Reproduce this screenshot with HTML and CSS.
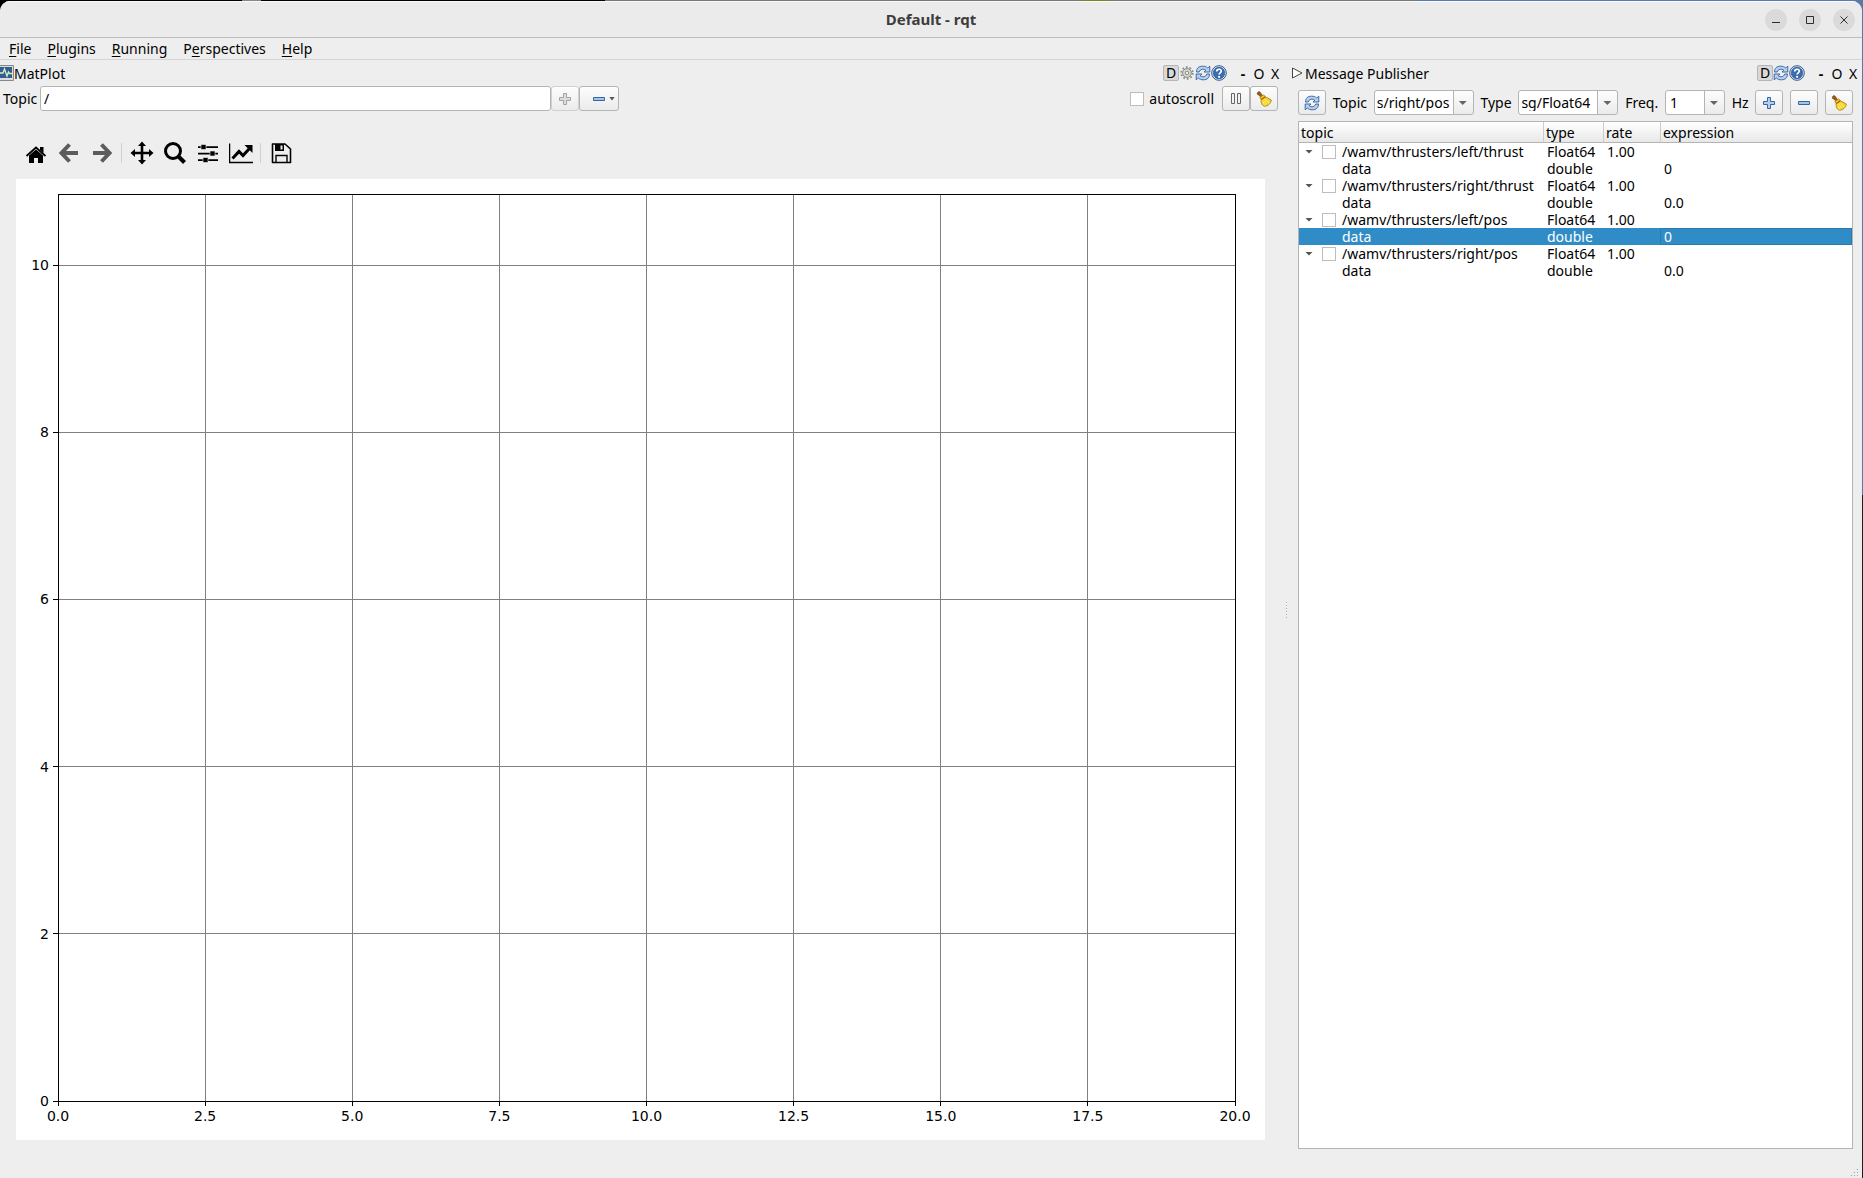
FILE: index.html
```
<!DOCTYPE html>
<html lang="en">
<head>
<meta charset="utf-8">
<title>Default - rqt</title>
<link rel="stylesheet" href="styles.css">
</head>
<body>
<svg class="defs" aria-hidden="true">
  <symbol id="refresh" viewBox="0 0 16 16">
    <path d="M1.500 7C1.500 3 4 1.200 7.500 1.200 10 1.200 11.500 1.800 12.700 3L14.800 1.200V7H9l1.800-1.900C8.500 3.400 5.200 4 4.200 7z" fill="#b9d0ec" stroke="#2f5f9e" stroke-width=".9"/>
    <path d="M14.500 9C14.500 13 12 14.800 8.500 14.800 6 14.800 4.500 14.200 3.300 13L1.200 14.800V9H7l-1.800 1.900C7.500 12.600 10.800 12 11.800 9z" fill="#b9d0ec" stroke="#2f5f9e" stroke-width=".9"/>
  </symbol>
  <symbol id="help" viewBox="0 0 16 16">
    <circle cx="8" cy="8" r="7.300" fill="#fff" stroke="#2c5590" stroke-width="1"/>
    <circle cx="8" cy="8" r="5.900" fill="#3a6db0" stroke="#2c5590" stroke-width=".6"/>
    <path d="M5.700 6.500C5.700 3.600 10.300 3.500 10.300 6.100 10.300 7.800 8.100 7.800 8.100 9.600" fill="none" stroke="#fff" stroke-width="1.700"/>
    <circle cx="8.100" cy="11.800" r="1.100" fill="#fff"/>
  </symbol>
  <symbol id="gear" viewBox="0 0 16 16">
    <circle cx="8" cy="8" r="5.800" fill="none" stroke="#8a8d84" stroke-width="1.800" stroke-dasharray="1.800 1.840"/>
    <circle cx="8" cy="8" r="4.400" fill="#d5d7d0" stroke="#8a8d84" stroke-width="1"/>
    <circle cx="8" cy="8" r="1.800" fill="#eee" stroke="#8a8d84" stroke-width="1"/>
  </symbol>
  <symbol id="broom" viewBox="0 0 16 16">
    <path d="M1.500 1.700C2.600 0 4.200.700 4.600 2L6.800 5 5 6.300 2.700 4C1.500 4 1 2.800 1.500 1.700z" fill="#9a5c18" stroke="#6e3a0c" stroke-width=".7"/>
    <path d="M3.800 6.600 7.800 3.900 9.300 5.800 15.300 9C15 12.500 12 15 8.300 15.300 5.500 14 4.600 11 5.200 8.500z" fill="#f3d62b" stroke="#b08a09" stroke-width=".9"/>
    <path d="M5.200 8.500 9.300 5.800" stroke="#cc3a18" stroke-width="1.200"/>
    <path d="M8 9 11 13.500M9.600 8.200 13 12M7 10.500 8.500 14.300" stroke="#fff3a0" stroke-width=".8"/>
  </symbol>
  <symbol id="plus" viewBox="0 0 16 16">
    <path d="M6.500 2.500h3v4h4v3h-4v4h-3v-4h-4v-3h4z" fill="#b5d0ee" stroke="#3465a4"/>
  </symbol>
  <symbol id="plus-off" viewBox="0 0 16 16">
    <path d="M6.500 2.500h3v4h4v3h-4v4h-3v-4h-4v-3h4z" fill="#dcdcdc" stroke="#a3a3a3"/>
  </symbol>
  <symbol id="minus" viewBox="0 0 16 16">
    <path d="M2.500 6.500h11v3h-11z" fill="#a3c4ea" stroke="#3465a4"/>
  </symbol>
</svg>

<div class="window">
  <header class="titlebar">
    <h1 class="window-title">Default - rqt</h1>
    <div class="window-buttons">
      <button class="round" aria-label="Minimize"><svg viewBox="0 0 22 22"><path d="M7 13.500h8" /></svg></button>
      <button class="round" aria-label="Maximize"><svg viewBox="0 0 22 22"><path d="M7.500 7.500h7v7h-7z"/></svg></button>
      <button class="round" aria-label="Close"><svg viewBox="0 0 22 22"><path d="M7.500 7.500l7 7M14.500 7.500l-7 7"/></svg></button>
    </div>
  </header>

  <nav class="menubar">
    <button><u>F</u>ile</button>
    <button><u>P</u>lugins</button>
    <button><u>R</u>unning</button>
    <button>P<u>e</u>rspectives</button>
    <button><u>H</u>elp</button>
  </nav>

  <main class="docks">
    <section class="dock plot-dock">
      <div class="dock-title">
        <svg class="dock-icon" viewBox="0 0 14 16"><path d="M-2 .5H13.500v15H-2z" fill="#ddd" stroke="#888"/><path d="M-2 2H12v11H-2z" fill="#2f5f96"/><path d="M0 8h3l1.500-4 2.500 7 1.500-4 1 1.500H12" fill="none" stroke="#d8efb8" stroke-width="1.300"/></svg>
        <h2>MatPlot</h2>
        <div class="dock-tools">
          <button class="d-button">D</button>
          <button class="flat" aria-label="Settings"><svg><use href="#gear"/></svg></button>
          <button class="flat" aria-label="Reload"><svg><use href="#refresh"/></svg></button>
          <button class="flat" aria-label="Help"><svg><use href="#help"/></svg></button>
          <button class="letter first">-</button>
          <button class="letter">O</button>
          <button class="letter">X</button>
        </div>
      </div>

      <div class="topic-row">
        <label for="plot-topic">Topic</label>
        <input id="plot-topic" class="topic-input" type="text" value="/">
        <button class="tool" disabled aria-label="Add topic"><svg><use href="#plus-off"/></svg></button>
        <button class="tool remove" aria-label="Remove topic"><svg><use href="#minus"/></svg><i class="caret"></i></button>
        <label class="autoscroll"><input type="checkbox" class="check">autoscroll</label>
        <button class="tool" aria-label="Pause"><svg viewBox="0 0 16 16"><path d="M3.500 2.500h3v10h-3zM9.500 2.500h3v10h-3z" fill="#f4f4f4" stroke="#666"/></svg></button>
        <button class="tool" aria-label="Clear plot"><svg><use href="#broom"/></svg></button>
      </div>

      <div class="plot-toolbar">
        <button aria-label="Home"><svg viewBox="0 0 24 24"><path d="M12 8.500 19 14.500v7.500h-5v-5h-4v5H5v-7.500z"/><path d="M2.500 15 12 6.500 21.500 15" fill="none" stroke="#000" stroke-width="1.800"/><path d="M16 6h3.500v6L16 9z"/></svg></button>
        <button aria-label="Back"><svg viewBox="0 0 24 24"><path d="M12.500 3.500 4.500 12l8 8.500M5 12h16" fill="none" stroke="#5c5c5c" stroke-width="4"/></svg></button>
        <button aria-label="Forward"><svg viewBox="0 0 24 24"><path d="M11.500 3.500 19.500 12l-8 8.500M19 12H3" fill="none" stroke="#5c5c5c" stroke-width="4"/></svg></button>
        <i class="rule"></i>
        <button aria-label="Pan"><svg viewBox="0 0 24 24"><path d="M12 .500 16 5h-2.700v5.700H19V8l4.500 4L19 16v-2.700h-5.700V19H16l-4 4.500L8 19h2.700v-5.700H5V16L.500 12 5 8v2.700h5.700V5H8z"/></svg></button>
        <button aria-label="Zoom"><svg viewBox="0 0 24 24"><circle cx="10" cy="10" r="7.500" fill="none" stroke="#000" stroke-width="3"/><path d="M15.500 15.500 21.500 21.500" stroke="#000" stroke-width="4"/></svg></button>
        <button aria-label="Configure subplots"><svg viewBox="0 0 24 24"><path d="M2 5.300h20v1.600H2zM2 11.800h20v1.600H2zM2 18.300h20v1.600H2z"/><path d="M5 3.500h5v5H5zM14 10h5v5h-5zM7 16.500h5v5H7z" stroke="#eee" stroke-width=".6"/></svg></button>
        <button aria-label="Edit axes"><svg viewBox="0 0 24 24"><path d="M.500 2.500V21.500H24" fill="none" stroke="#000" stroke-width="1.500"/><path d="M3.500 17.500 10 10.500l4 4 6-6.500" fill="none" stroke="#000" stroke-width="3"/><path d="M15.500 4H23.500v8z"/></svg></button>
        <i class="rule"></i>
        <button aria-label="Save"><svg viewBox="0 0 24 24"><path d="M3.500 3H16l5.500 5v13.500h-18z" fill="none" stroke="#000" stroke-width="1.600" stroke-linejoin="round"/><path d="M6 3h9v7H6zM11.500 4.500V8.500h2V4.500z" fill-rule="evenodd"/><path d="M7 21v-6.500h11v6.500" fill="none" stroke="#000" stroke-width="1.400"/></svg></button>
      </div>

      <div class="canvas">
        <svg class="plot" role="img" aria-label="Empty plot">
          <g class="grid">
            <line x1="12.5%" x2="12.5%" y1="0" y2="100%"/><line x1="25%" x2="25%" y1="0" y2="100%"/>
            <line x1="37.5%" x2="37.5%" y1="0" y2="100%"/><line x1="50%" x2="50%" y1="0" y2="100%"/>
            <line x1="62.5%" x2="62.5%" y1="0" y2="100%"/><line x1="75%" x2="75%" y1="0" y2="100%"/>
            <line x1="87.5%" x2="87.5%" y1="0" y2="100%"/>
            <line x1="0" x2="100%" y1="7.83%" y2="7.83%"/><line x1="0" x2="100%" y1="26.26%" y2="26.26%"/>
            <line x1="0" x2="100%" y1="44.7%" y2="44.7%"/><line x1="0" x2="100%" y1="63.13%" y2="63.13%"/>
            <line x1="0" x2="100%" y1="81.57%" y2="81.57%"/>
          </g>
          <rect class="frame" width="100%" height="100%"/>
          <svg class="ticks" y="100%">
            <line x1="0" x2="0" y2="5"/><line x1="12.5%" x2="12.5%" y2="5"/><line x1="25%" x2="25%" y2="5"/>
            <line x1="37.5%" x2="37.5%" y2="5"/><line x1="50%" x2="50%" y2="5"/><line x1="62.5%" x2="62.5%" y2="5"/>
            <line x1="75%" x2="75%" y2="5"/><line x1="87.5%" x2="87.5%" y2="5"/><line x1="100%" x2="100%" y2="5"/>
            <g class="x-labels">
              <text x="0" y="20">0.0</text><text x="12.5%" y="20">2.5</text><text x="25%" y="20">5.0</text>
              <text x="37.5%" y="20">7.5</text><text x="50%" y="20">10.0</text><text x="62.5%" y="20">12.5</text>
              <text x="75%" y="20">15.0</text><text x="87.5%" y="20">17.5</text><text x="100%" y="20">20.0</text>
            </g>
          </svg>
          <g class="ticks y-labels">
            <line x1="-5" x2="0" y1="7.83%" y2="7.83%"/><line x1="-5" x2="0" y1="26.26%" y2="26.26%"/>
            <line x1="-5" x2="0" y1="44.7%" y2="44.7%"/><line x1="-5" x2="0" y1="63.13%" y2="63.13%"/>
            <line x1="-5" x2="0" y1="81.57%" y2="81.57%"/><line x1="-5" x2="0" y1="100%" y2="100%"/>
            <text x="-9" y="7.83%" dy="5">10</text><text x="-9" y="26.26%" dy="5">8</text>
            <text x="-9" y="44.7%" dy="5">6</text><text x="-9" y="63.13%" dy="5">4</text>
            <text x="-9" y="81.57%" dy="5">2</text><text x="-9" y="100%" dy="5">0</text>
          </g>
        </svg>
      </div>
    </section>

    <div class="splitter"><i></i></div>

    <section class="dock publisher-dock">
      <div class="dock-title">
        <svg class="dock-icon" viewBox="0 0 14 16"><path d="M1.500 3 11 8 1.500 13z" fill="#fff" stroke="#444"/></svg>
        <h2>Message Publisher</h2>
        <div class="dock-tools">
          <button class="d-button">D</button>
          <button class="flat" aria-label="Reload"><svg><use href="#refresh"/></svg></button>
          <button class="flat" aria-label="Help"><svg><use href="#help"/></svg></button>
          <button class="letter first">-</button>
          <button class="letter">O</button>
          <button class="letter">X</button>
        </div>
      </div>

      <div class="publish-row">
        <button class="tool" aria-label="Refresh topics"><svg><use href="#refresh"/></svg></button>
        <label for="pub-topic">Topic</label>
        <span class="combo"><select id="pub-topic"><option>s/right/pos</option></select></span>
        <label for="pub-type">Type</label>
        <span class="combo"><select id="pub-type"><option>sg/Float64</option></select></span>
        <label for="pub-freq">Freq.</label>
        <span class="combo small"><select id="pub-freq"><option>1</option></select></span>
        <span>Hz</span>
        <button class="tool" aria-label="Add publisher"><svg><use href="#plus"/></svg></button>
        <button class="tool" aria-label="Remove publisher"><svg><use href="#minus"/></svg></button>
        <button class="tool" aria-label="Clear publishers"><svg><use href="#broom"/></svg></button>
      </div>

      <div class="tree">
        <table>
          <colgroup><col class="c-topic"><col class="c-type"><col class="c-rate"><col></colgroup>
          <thead><tr><th>topic</th><th>type</th><th>rate</th><th>expression</th></tr></thead>
          <tbody>
            <tr><td><label class="node"><i class="caret"></i><input type="checkbox" class="check">/wamv/thrusters/left/thrust</label></td><td>Float64</td><td>1.00</td><td></td></tr>
            <tr><td class="leaf">data</td><td>double</td><td></td><td>0</td></tr>
            <tr><td><label class="node"><i class="caret"></i><input type="checkbox" class="check">/wamv/thrusters/right/thrust</label></td><td>Float64</td><td>1.00</td><td></td></tr>
            <tr><td class="leaf">data</td><td>double</td><td></td><td>0.0</td></tr>
            <tr><td><label class="node"><i class="caret"></i><input type="checkbox" class="check">/wamv/thrusters/left/pos</label></td><td>Float64</td><td>1.00</td><td></td></tr>
            <tr class="selected"><td class="leaf">data</td><td>double</td><td></td><td class="current">0</td></tr>
            <tr><td><label class="node"><i class="caret"></i><input type="checkbox" class="check">/wamv/thrusters/right/pos</label></td><td>Float64</td><td>1.00</td><td></td></tr>
            <tr><td class="leaf">data</td><td>double</td><td></td><td>0.0</td></tr>
          </tbody>
        </table>
      </div>
    </section>
  </main>
  <i class="grip"></i>
</div>
</body>
</html>
```
FILE: styles.css
```
* { box-sizing: border-box; }

body {
  margin: 0;
  height: 100vh;
  padding: 1px 1px 0 0;
  overflow: hidden;
  background:
    linear-gradient(90deg, #000 0 13%, #888 13% 14%, #000 14% 32.5%, #777 32.5% 58%, #6f8a1e 58% 59.6%, #777 59.6% 76%, transparent 76%) top / 100% 4px no-repeat,
    linear-gradient(#000, #000) left top / 12px 12px no-repeat,
    linear-gradient(#5a78a8 0 42%, #1c1f26 42%);
  font: 14px/17px "Noto Sans", "Open Sans", sans-serif;
  color: #000;
}

.defs { position: absolute; width: 0; height: 0; }

.window {
  position: relative;
  display: flex;
  flex-direction: column;
  height: 100%;
  background: #eee;
  border-radius: 10px 10px 0 0;
  overflow: hidden;
}

button, input, select { font: inherit; color: inherit; margin: 0; }
button { padding: 0; border: 0; background: none; }
h1, h2 { margin: 0; font-size: inherit; font-weight: normal; white-space: nowrap; }
svg { display: block; }

/* title bar */
.titlebar {
  display: grid;
  grid-template-columns: 1fr auto 1fr;
  align-items: center;
  height: 37px;
  flex: none;
  padding: 0 7px;
  background: #ebebeb;
  border-top: 1px solid #fafafa;
  border-bottom: 1px solid #bdbdbd;
}
.window-title { grid-column: 2; font-size: 15px; font-weight: bold; color: #3d3d3d; }
.window-buttons { display: flex; justify-content: flex-end; gap: 12px; }
.round { width: 22px; height: 22px; border-radius: 50%; background: #dadada; }
.round svg { width: 22px; height: 22px; fill: none; stroke: #2e2e2e; }

/* menus */
.menubar {
  display: flex;
  align-items: center;
  gap: 16px;
  height: 22px;
  flex: none;
  padding: 0 9px;
  border-bottom: 1px solid #d4d4d4;
}
.menubar u { text-underline-offset: 2px; }

/* docks */
.docks { display: flex; flex: 1; min-height: 0; }
.dock { display: flex; flex-direction: column; min-width: 0; }
.plot-dock { flex: 1284; padding-bottom: 38px; }
.publisher-dock { flex: 571; padding-bottom: 29px; }
.splitter { display: flex; align-items: center; width: 7px; flex: none; padding-bottom: 18px; }
.splitter i { width: 1px; height: 16px; margin-left: 2px; background: repeating-linear-gradient(#aaa 0 1px, #fff 1px 2px, transparent 2px 3px); }

.dock-title { display: flex; align-items: center; height: 26px; flex: none; padding-right: 1px; }
.dock-icon { width: 14px; height: 16px; }
.dock-tools { display: flex; align-items: center; margin-left: auto; }
.d-button { width: 16px; height: 16px; line-height: 14px; background: #d9d9d9; border: 1px solid #b5b5b5; border-radius: 2px; }
.flat svg { width: 16px; height: 16px; }
.letter { width: 16px; }
.letter.first { margin-left: 8px; font-weight: bold; }

/* shared controls */
.tool {
  display: flex;
  align-items: center;
  justify-content: center;
  width: 28px;
  height: 25px;
  flex: none;
  border: 1px solid #b4b4b4;
  border-radius: 3px;
  background: linear-gradient(#fdfdfd, #ebebeb);
}
.tool:disabled { border-color: #d0d0d0; }
.tool svg { width: 16px; height: 16px; }
.caret { flex: none; width: 8px; height: 4px; background: #555; clip-path: polygon(0 0, 100% 0, 50% 100%); }
.check { appearance: none; width: 14px; height: 14px; flex: none; background: #fff; border: 1px solid #bdbdbd; }

/* topic entry */
.topic-row { display: flex; align-items: center; height: 25px; flex: none; padding: 0 6px 0 3px; }
.topic-row > label:first-child { width: 37px; }
.topic-input { width: 511px; height: 25px; padding: 0 3px; border: 1px solid #b4b4b4; border-radius: 3px; background: #fff; }
.remove { width: 40px; padding-left: 8px; gap: 2px; }
.remove .caret { width: 6px; }
.autoscroll { display: flex; align-items: center; gap: 5px; margin: 0 8px 0 auto; }

/* plot navigation */
.plot-toolbar { display: flex; align-items: center; height: 68px; flex: none; padding: 16px 19px 0; }
.plot-toolbar button { width: 33px; display: flex; justify-content: center; }
.plot-toolbar svg { width: 24px; height: 24px; }
.rule { width: 1px; height: 20px; margin: 0 3px; background: #d0d0d0; }

/* plot */
.canvas { flex: 1; min-height: 0; margin: 0 19px 0 16px; padding: 15px 30px 39px 42px; background: #fff; }
.plot { width: 100%; height: 100%; overflow: visible; shape-rendering: crispEdges; font: 14px "DejaVu Sans", sans-serif; }
.ticks { overflow: visible; }
.grid line { stroke: #808080; }
.frame { fill: none; stroke: #000; }
.ticks line { stroke: #000; }
.x-labels { text-anchor: middle; }
.y-labels { text-anchor: end; }

/* publisher controls */
.publish-row { display: flex; align-items: center; justify-content: space-between; height: 35px; flex: none; padding: 4px 9px 6px 7px; }
.combo { position: relative; width: 100px; height: 25px; }
.combo.small { width: 60px; }
.combo select {
  appearance: none;
  width: 100%;
  height: 25px;
  padding: 0 0 0 2px;
  border: 1px solid #b4b4b4;
  border-radius: 3px;
  background: linear-gradient(90deg, #b4b4b4 1px, transparent 1px) right / 20px 100% no-repeat, linear-gradient(#fdfdfd, #ebebeb) right / 20px 100% no-repeat, #fff;
}
.combo.small select { padding-left: 4px; }
.combo::after { content: ""; position: absolute; right: 7px; top: 11px; width: 8px; height: 4px; background: #666; clip-path: polygon(0 0, 100% 0, 50% 100%); }

/* message tree */
.tree { flex: 1; min-height: 0; margin: 0 9px 0 7px; border: 1px solid #b4b4b4; background: #fff; overflow: hidden; }
.tree table { width: 100%; table-layout: fixed; border-collapse: separate; border-spacing: 0; }
.c-topic { width: 244px; }
.c-type { width: 60px; }
.c-rate { width: 57px; }
.tree th { height: 21px; padding: 0 2px; text-align: left; font-weight: normal; border-bottom: 1px solid #b4b4b4; background: linear-gradient(#fff, #e8e8e8); }
.tree th + th { border-left: 1px solid #ccc; }
.tree td { height: 17px; padding: 0 0 0 4px; line-height: 17px; white-space: nowrap; }
.tree .leaf { padding-left: 43px; }
.node { display: flex; align-items: center; height: 17px; padding-left: 2px; }
.node .check { margin: 0 6px 0 9px; }
.selected { background: #308cc6; color: #fff; }
.selected .current { box-shadow: inset 0 0 0 1px #2a7ab0; }

.grip {
  position: absolute;
  right: 2px;
  bottom: 0;
  width: 12px;
  height: 12px;
  background: linear-gradient(90deg, transparent 1px, #eee 1px) 0 0 / 3px 3px, linear-gradient(#aaa 1px, transparent 1px) 0 0 / 3px 3px;
  clip-path: polygon(100% 0, 100% 100%, 0 100%);
}
```
